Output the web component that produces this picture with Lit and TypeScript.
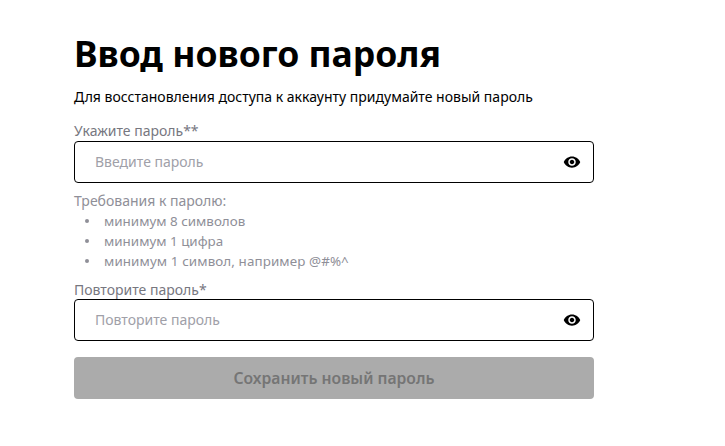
import { LitElement, html, css } from "lit";
import { customElement } from "lit/decorators.js";

const eye = html`<svg class="eye" viewBox="0 0 24 24" width="18" height="18" aria-hidden="true"><path fill="#000" d="M12 4.5C7 4.5 2.73 7.61 1 12c1.73 4.39 6 7.5 11 7.5s9.27-3.11 11-7.5c-1.73-4.39-6-7.5-11-7.5zM12 17c-2.76 0-5-2.24-5-5s2.24-5 5-5 5 2.24 5 5-2.24 5-5 5zm0-8c-1.66 0-3 1.34-3 3s1.34 3 3 3 3-1.34 3-3-1.34-3-3-3z"/></svg>`;

@customElement("app-root")
export class AppRoot extends LitElement {
  static styles = css`
    :host {
      display: block;
      background: #fff;
      height: 446px;
      overflow: hidden;
      font-family: "Noto Sans", "Liberation Sans", sans-serif;
    }
    .form {
      width: 520px;
      margin-left: 74px;
      padding-top: 30px;
      display: flex;
      flex-direction: column;
    }
    h1 {
      margin: 0;
      font-size: 35.5px;
      line-height: 46px;
      font-weight: 700;
      color: #000;
    }
    .sub {
      margin: 11px 0 0;
      font-size: 14px;
      line-height: 20px;
      color: #000;
    }
    label {
      display: block;
      margin: 15px 0 1px;
      font-size: 14px;
      line-height: 18px;
      color: #77777f;
    }
    .second { margin: 10px 0 0; }
    .field {
      box-sizing: border-box;
      height: 42px;
      border: 1px solid #000;
      border-radius: 4px;
      display: flex;
      align-items: center;
      justify-content: space-between;
      padding: 0 12px 0 20px;
      background: #fff;
    }
    .ph { font-size: 14px; color: #a0a0a8; padding-bottom: 2px; }
    .eye { display: block; }
    .req {
      margin-top: 8px;
      font-size: 14px;
      line-height: 20px;
      color: #8f8f98;
    }
    ul {
      margin: 0;
      padding: 0;
      list-style: none;
      font-size: 13.4px;
      line-height: 20px;
      color: #8f8f98;
    }
    li {
      display: flex;
      align-items: center;
    }
    li::before {
      content: "";
      width: 4px;
      height: 4px;
      border-radius: 50%;
      background: #8f8f98;
      margin: 0 15px 0 11px;
    }
    .long { letter-spacing: 0.1px; }
    button {
      margin-top: 16px;
      height: 42px;
      border: 0;
      border-radius: 4px;
      background: #ababab;
      color: #757575;
      font: 600 15.7px "Noto Sans", "Liberation Sans", sans-serif;
      padding: 0;
    }
  `;

  render() {
    return html`<div class="form">
      <h1>Ввод нового пароля</h1>
      <p class="sub">Для восстановления доступа к аккаунту придумайте новый пароль</p>
      <label>Укажите пароль**</label>
      <div class="field"><span class="ph">Введите пароль</span>${eye}</div>
      <div class="req">Требования к паролю:</div>
      <ul>
        <li>минимум 8 символов</li>
        <li>минимум 1 цифра</li>
        <li><span class="long">минимум 1 символ, например @#%^</span></li>
      </ul>
      <label class="second">Повторите пароль*</label>
      <div class="field"><span class="ph">Повторите пароль</span>${eye}</div>
      <button disabled>Сохранить новый пароль</button>
    </div>`;
  }
}
